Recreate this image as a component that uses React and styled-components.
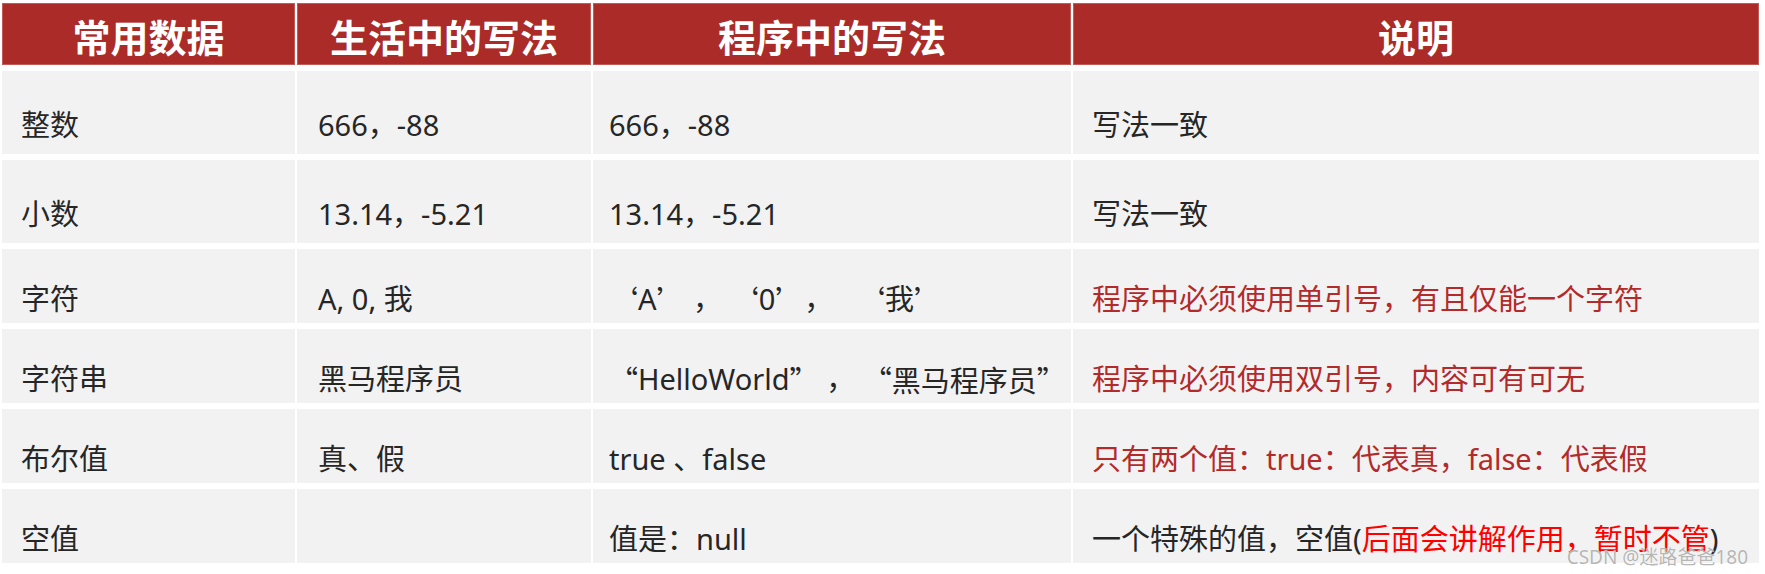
import React from "react";
import styled, { createGlobalStyle } from "styled-components";

const GlobalStyle = createGlobalStyle`
  html, body {
    margin: 0;
    padding: 0;
    background: #fff;
  }
  body {
    font-family: "Noto Sans", "Noto Sans CJK SC", sans-serif;
    color: #262626;
  }
`;

const Page = styled.div`
  position: relative;
  width: 1765px;
  height: 574px;
  padding: 3px 0 0 2px;
  box-sizing: border-box;
`;

const Table = styled.div`
  display: grid;
  grid-template-columns: 293px 294px 478px 686px;
  grid-template-rows: 62px 83px 83px 74px 74px 74px 74px;
  column-gap: 2px;
  row-gap: 6px;
`;

const HeadCell = styled.div`
  display: flex;
  align-items: center;
  justify-content: center;
  padding-top: 4px;
  box-sizing: border-box;
  background: #aa2b27;
  box-shadow: inset 0 0 0 1px #c25a55;
  color: #fff;
  font-family: "Noto Sans CJK SC", sans-serif;
  font-weight: 700;
  font-size: 38px;
  line-height: 1;
`;

const Cell = styled.div`
  display: flex;
  align-items: center;
  padding: 26px 0 0 ${(p) => p.$indent || 19}px;
  box-sizing: border-box;
  background: #f2f2f2;
  font-size: 29px;
  line-height: 1.2;
  white-space: pre;
  color: ${(p) => (p.$warn ? "#b22a2a" : "#262626")};
`;

// quotes taken from the CJK face, like the slide's YaHei rendering
const Q = styled.span`
  font-family: "Noto Sans CJK SC", sans-serif;
`;

const Hot = styled.span`
  color: #ff0000;
`;

const Watermark = styled.div`
  position: absolute;
  right: 17px;
  bottom: 7px;
  font-family: "Noto Sans", "Noto Sans CJK SC", sans-serif;
  font-size: 19px;
  line-height: 1;
  color: rgba(150, 150, 150, 0.7);
  text-shadow: 0 0 1px #fff;
  pointer-events: none;
`;

const heads = ["常用数据", "生活中的写法", "程序中的写法", "说明"];

const rows = [
  {
    name: "整数",
    life: "666，-88",
    code: "666，-88",
    note: "写法一致",
  },
  {
    name: "小数",
    life: "13.14，-5.21",
    code: "13.14，-5.21",
    note: "写法一致",
  },
  {
    name: "字符",
    life: "A, 0, 我",
    code: (
      <>
        <Q>‘</Q>A<Q>’</Q>{" ， "}<Q>‘</Q>0<Q>’</Q>{"，   "}
        <Q>‘</Q>我<Q>’</Q>
      </>
    ),
    note: "程序中必须使用单引号，有且仅能一个字符",
    warn: true,
  },
  {
    name: "字符串",
    life: "黑马程序员",
    code: (
      <>
        <Q>“</Q>HelloWorld<Q>”</Q>{" ， "}<Q>“黑马程序员”</Q>
      </>
    ),
    note: "程序中必须使用双引号，内容可有可无",
    warn: true,
  },
  {
    name: "布尔值",
    life: "真、假",
    code: "true 、false",
    note: "只有两个值：true：代表真，false：代表假",
    warn: true,
  },
  {
    name: "空值",
    life: "",
    code: "值是：null",
    note: (
      <>
        一个特殊的值，空值(<Hot>后面会讲解作用，暂时不管</Hot>)
      </>
    ),
  },
];

export default function App() {
  return (
    <>
      <GlobalStyle />
      <Page>
        <Table>
          {heads.map((h) => (
            <HeadCell key={h}>{h}</HeadCell>
          ))}
          {rows.map((r) => (
            <React.Fragment key={r.name}>
              <Cell>{r.name}</Cell>
              <Cell $indent={21}>{r.life}</Cell>
              <Cell $indent={16}>{r.code}</Cell>
              <Cell $warn={r.warn}>{r.note}</Cell>
            </React.Fragment>
          ))}
        </Table>
        <Watermark>CSDN @迷路爸爸180</Watermark>
      </Page>
    </>
  );
}
